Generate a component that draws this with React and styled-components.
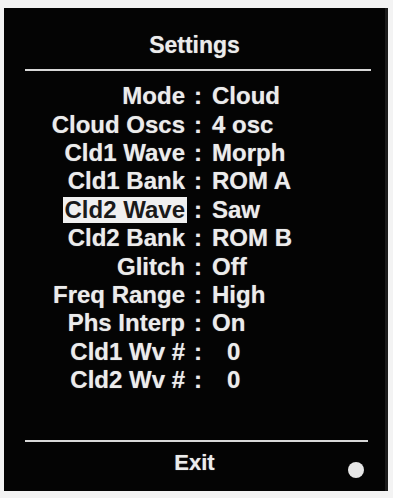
import React from "react";
import styled, { createGlobalStyle } from "styled-components";

const GlobalStyle = createGlobalStyle`
  html, body {
    margin: 0;
    padding: 0;
    background: #f3f3f3;
  }
`;

const settings = [
  { label: "Mode", value: "Cloud" },
  { label: "Cloud Oscs", value: "4 osc" },
  { label: "Cld1 Wave", value: "Morph" },
  { label: "Cld1 Bank", value: "ROM A" },
  { label: "Cld2 Wave", value: "Saw", selected: true },
  { label: "Cld2 Bank", value: "ROM B" },
  { label: "Glitch", value: "Off" },
  { label: "Freq Range", value: "High" },
  { label: "Phs Interp", value: "On" },
  { label: "Cld1 Wv #", value: "0", numeric: true },
  { label: "Cld2 Wv #", value: "0", numeric: true },
];

const App = () => {
  return (
    <>
      <GlobalStyle />
      <Screen>
        <Header>
          <Title>Settings</Title>
          <Rule />
        </Header>
        <List>
          {settings.map((s) => (
            <Row key={s.label}>
              <Label>
                <LabelText $selected={s.selected}>{s.label}</LabelText>
              </Label>
              <Colon>:</Colon>
              <Value $numeric={s.numeric}>{s.value}</Value>
            </Row>
          ))}
        </List>
        <Footer>
          <Rule $bottom />
          <FooterBar>
            <span />
            <Exit>Exit</Exit>
            <Dot />
          </FooterBar>
        </Footer>
      </Screen>
    </>
  );
};

const Screen = styled.div`
  box-sizing: border-box;
  width: 384px;
  height: 483px;
  margin: 8px 0 0 4px;
  background: #040404;
  border-right: 3px solid #1c1c1c;
  display: flex;
  flex-direction: column;
  font-family: "Liberation Sans", Arial, sans-serif;
  font-weight: bold;
  color: #ececec;
  text-shadow: 0 0 1px rgba(255, 255, 255, 0.5);
`;

const Header = styled.div`
  display: flex;
  flex-direction: column;
  align-items: center;
  padding-top: 23px;
`;

const Title = styled.div`
  font-size: 23px;
  line-height: 28px;
  margin-bottom: 10px;
`;

const Rule = styled.div`
  align-self: stretch;
  height: 2px;
  background: #d8d8d8;
  margin: ${(p) => (p.$bottom ? "0 17px 0 21px" : "0 14px 0 21px")};
`;

const List = styled.div`
  display: flex;
  flex-direction: column;
  padding-top: 11px;
`;

const Row = styled.div`
  display: grid;
  grid-template-columns: 181px 26px 1fr;
  height: 28.4px;
  align-items: center;
  font-size: 24px;
`;

const Label = styled.div`
  text-align: right;
`;

const LabelText = styled.span`
  display: inline-block;
  line-height: 26px;
  padding: 0 2px;
  margin-right: -2px;
  background: ${(p) => (p.$selected ? "#f0f0f0" : "transparent")};
  color: ${(p) => (p.$selected ? "#1a1a1a" : "inherit")};
  text-shadow: ${(p) => (p.$selected ? "none" : "inherit")};
`;

const Colon = styled.div`
  text-align: center;
`;

const Value = styled.div`
  padding-left: ${(p) => (p.$numeric ? "16px" : "1px")};
`;

const Footer = styled.div`
  margin-top: auto;
  display: flex;
  flex-direction: column;
`;

const FooterBar = styled.div`
  display: grid;
  grid-template-columns: 1fr auto 1fr;
  align-items: start;
  height: 49px;
  padding-top: 7px;
  box-sizing: border-box;
`;

const Exit = styled.div`
  font-size: 22px;
  line-height: 28px;
`;

const Dot = styled.div`
  justify-self: end;
  width: 16px;
  height: 16px;
  border-radius: 50%;
  background: #e6e6e6;
  margin: 13px 21px 0 0;
`;

export default App;
